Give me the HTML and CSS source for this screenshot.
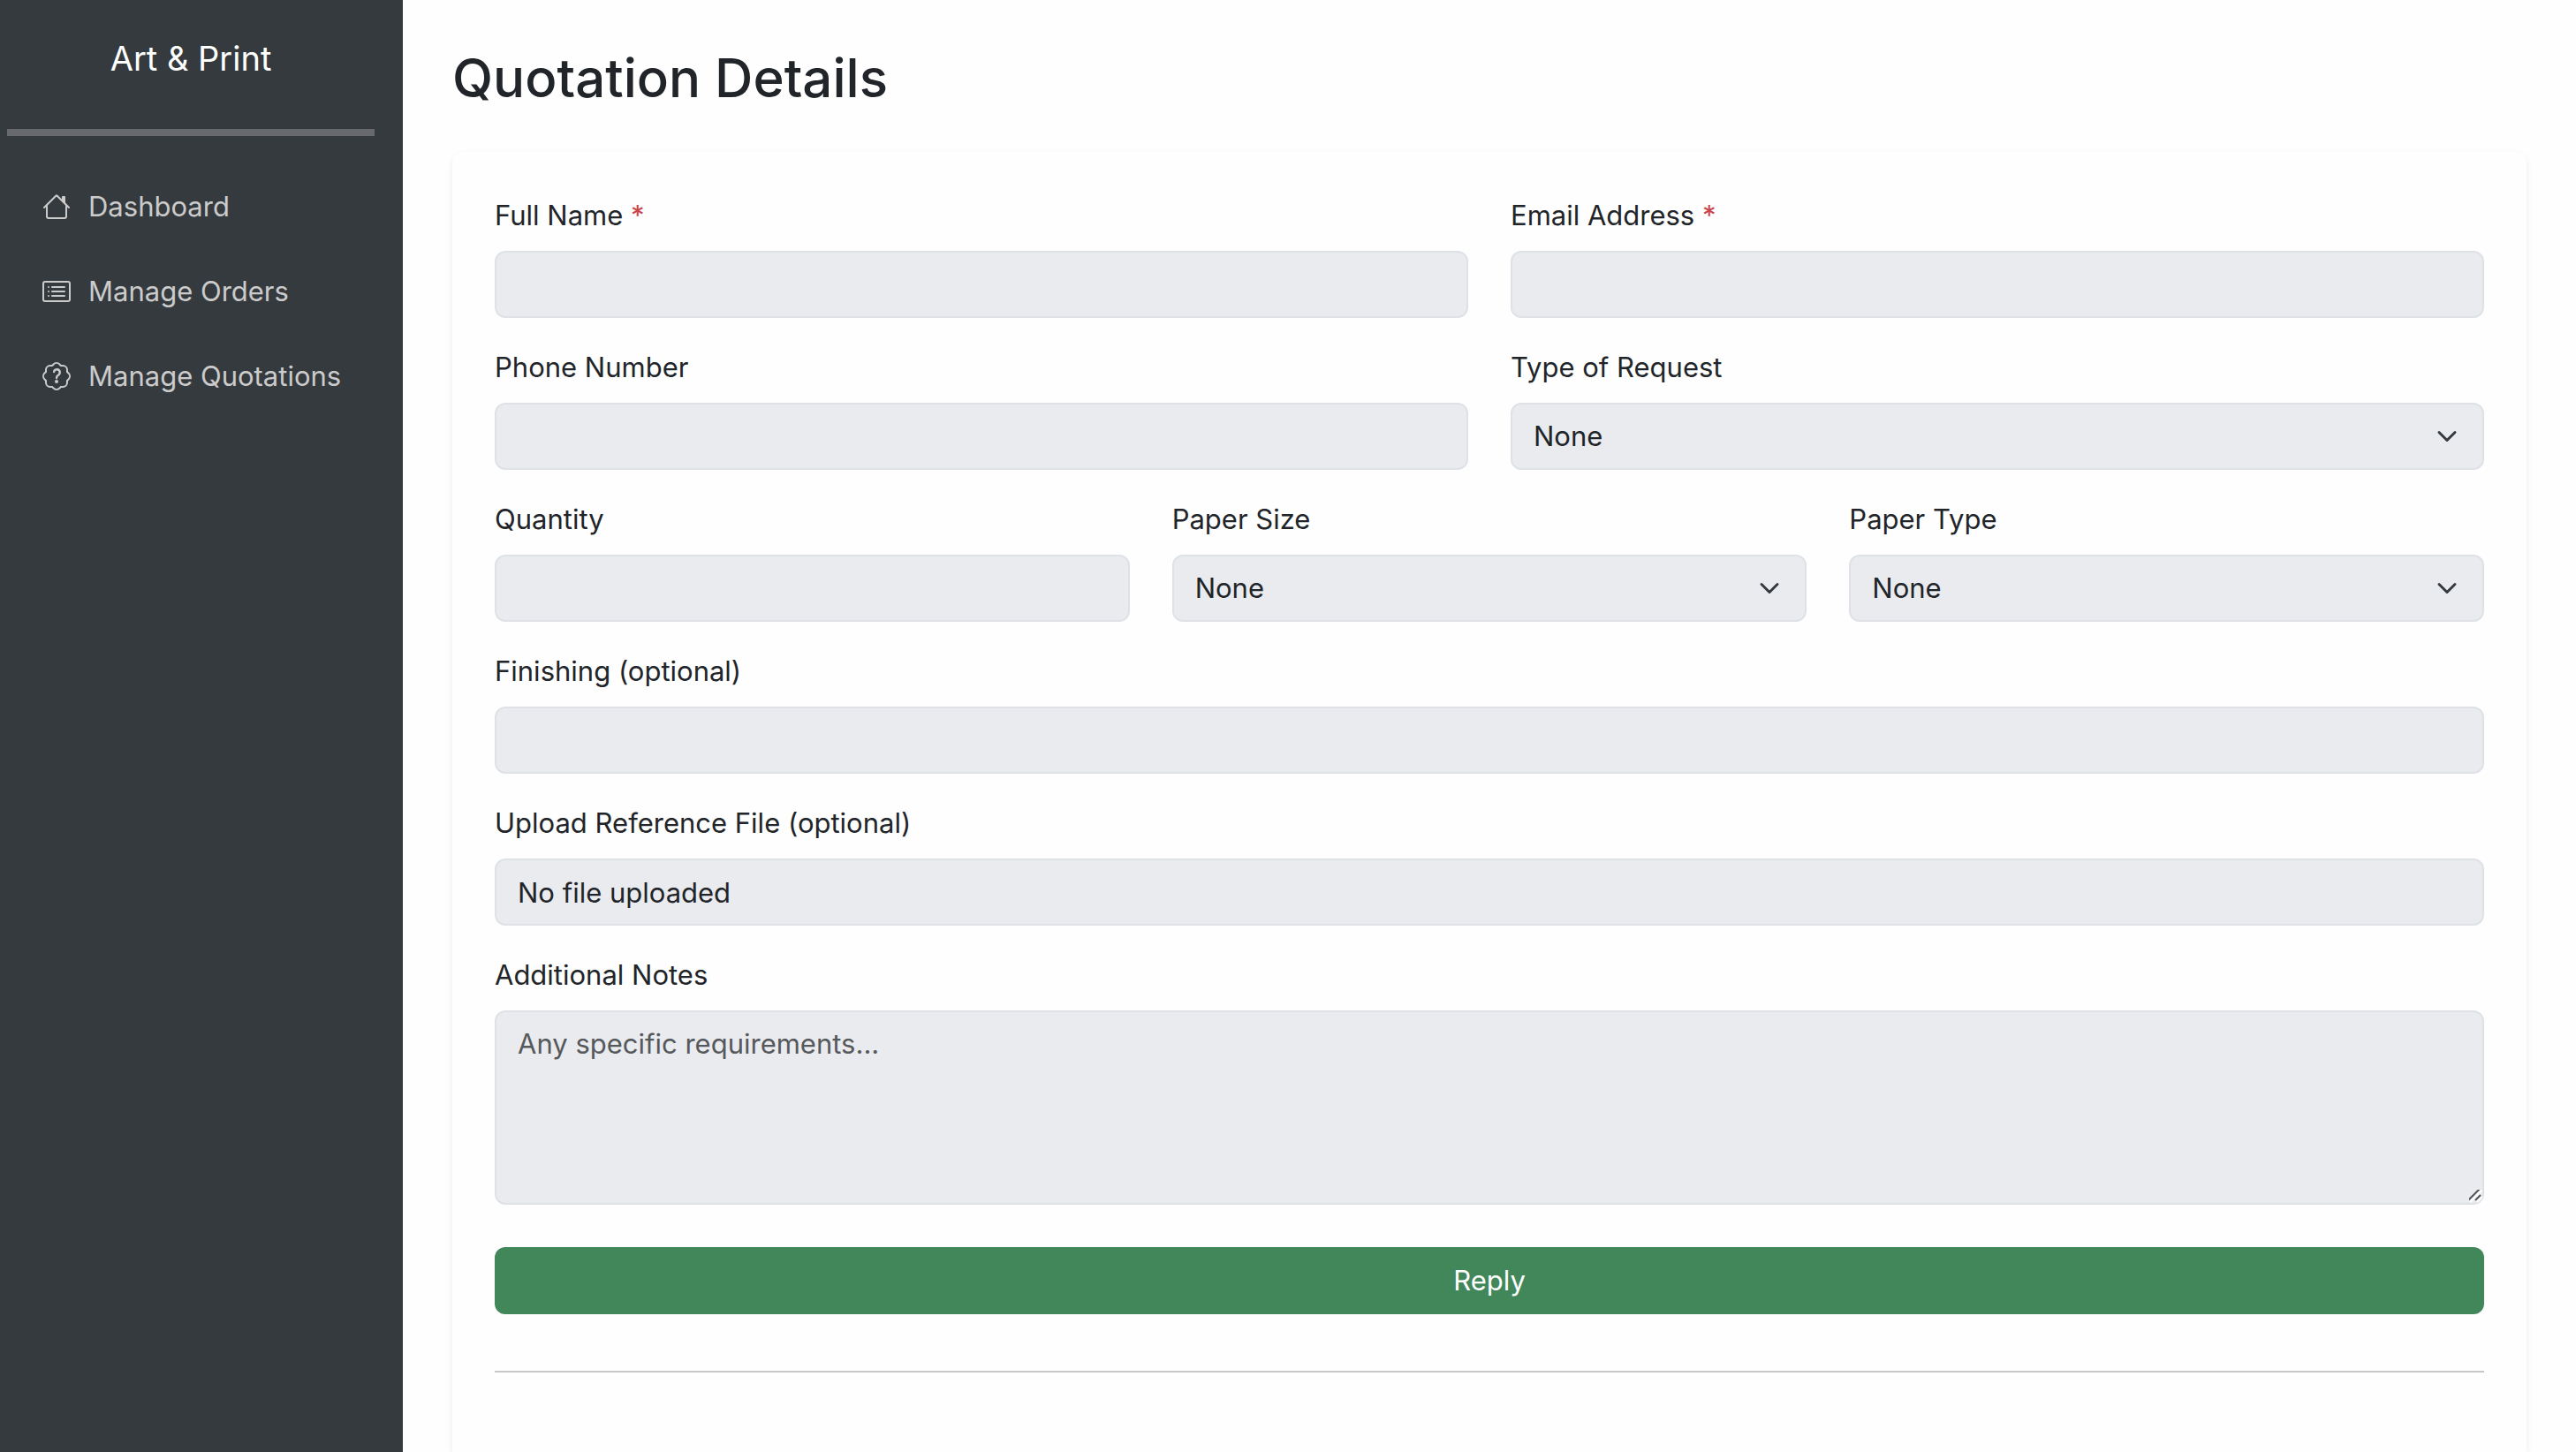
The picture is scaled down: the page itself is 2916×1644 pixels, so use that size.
FILE: index.html
```html
<!DOCTYPE html>
<html lang="en">
<head>
  <meta charset="utf-8">
  <meta name="viewport" content="width=device-width, initial-scale=1">
  <title>Quotation Details</title>
  <link rel="stylesheet" href="styles.css">
</head>
<body>
  <div class="layout">
    <aside class="sidebar">
      <h2 class="brand">Art &amp; Print</h2>
      <hr class="sidebar-rule">
      <nav class="nav">
        <a class="nav-link" href="#dashboard">
          <svg class="icon" viewBox="0 0 16 16" aria-hidden="true"><path d="M8.707 1.5a1 1 0 0 0-1.414 0L.646 8.146a.5.5 0 0 0 .708.708L2 8.207V13.5A1.5 1.5 0 0 0 3.5 15h9a1.5 1.5 0 0 0 1.5-1.5V8.207l.646.647a.5.5 0 0 0 .708-.708L13 5.793V2.5a.5.5 0 0 0-.5-.5h-1a.5.5 0 0 0-.5.5v1.293zM13 7.207V13.5a.5.5 0 0 1-.5.5h-9a.5.5 0 0 1-.5-.5V7.207l5-5z"/></svg>
          <span>Dashboard</span>
        </a>
        <a class="nav-link" href="#orders">
          <svg class="icon" viewBox="0 0 16 16" aria-hidden="true"><path d="M14.5 3a.5.5 0 0 1 .5.5v9a.5.5 0 0 1-.5.5h-13a.5.5 0 0 1-.5-.5v-9a.5.5 0 0 1 .5-.5zm-13-1A1.5 1.5 0 0 0 0 3.5v9A1.5 1.5 0 0 0 1.5 14h13a1.5 1.5 0 0 0 1.5-1.5v-9A1.5 1.5 0 0 0 14.5 2z"/><path d="M5 8a.5.5 0 0 1 .5-.5h7a.5.5 0 0 1 0 1h-7A.5.5 0 0 1 5 8m0-2.5a.5.5 0 0 1 .5-.5h7a.5.5 0 0 1 0 1h-7a.5.5 0 0 1-.5-.5m0 5a.5.5 0 0 1 .5-.5h7a.5.5 0 0 1 0 1h-7a.5.5 0 0 1-.5-.5m-1-5a.5.5 0 1 1-1 0 .5.5 0 0 1 1 0M4 8a.5.5 0 1 1-1 0 .5.5 0 0 1 1 0m0 2.5a.5.5 0 1 1-1 0 .5.5 0 0 1 1 0"/></svg>
          <span>Manage Orders</span>
        </a>
        <a class="nav-link" href="#quotations">
          <svg class="icon" viewBox="0 0 16 16" aria-hidden="true"><path d="M8.05 9.6c.336 0 .504-.24.554-.627.04-.534.198-.815.847-1.26.673-.475 1.049-1.09 1.049-1.986 0-1.325-.92-2.227-2.262-2.227-1.02 0-1.792.492-2.1 1.29A1.7 1.7 0 0 0 6 5.48c0 .393.203.64.545.64.272 0 .455-.147.564-.51.158-.592.525-.915 1.074-.915.61 0 1.03.446 1.03 1.084 0 .563-.208.885-.822 1.325-.619.433-.926.914-.926 1.64v.111c0 .428.208.745.585.745"/><path d="m10.273 2.513-.921-.944.715-.698.622.637.89-.011a2.89 2.89 0 0 1 2.924 2.924l-.01.89.636.622a2.89 2.89 0 0 1 0 4.134l-.637.622.011.89a2.89 2.89 0 0 1-2.924 2.924l-.89-.01-.622.636a2.89 2.89 0 0 1-4.134 0l-.622-.637-.89.011a2.89 2.89 0 0 1-2.924-2.924l.01-.89-.636-.622a2.89 2.89 0 0 1 0-4.134l.637-.622-.011-.89a2.89 2.89 0 0 1 2.924-2.924l.89.01.622-.636a2.89 2.89 0 0 1 4.134 0l-.715.698a1.89 1.89 0 0 0-2.704 0l-.92.944-1.32-.016a1.89 1.89 0 0 0-1.911 1.912l.016 1.318-.944.921a1.89 1.89 0 0 0 0 2.704l.944.92-.016 1.32a1.89 1.89 0 0 0 1.912 1.911l1.318-.016.921.944a1.89 1.89 0 0 0 2.704 0l.92-.944 1.32.016a1.89 1.89 0 0 0 1.911-1.912l-.016-1.318.944-.921a1.89 1.89 0 0 0 0-2.704l-.944-.92.016-1.32a1.89 1.89 0 0 0-1.912-1.911z"/><path d="M7.002 11a1 1 0 1 1 2 0 1 1 0 0 1-2 0"/></svg>
          <span>Manage Quotations</span>
        </a>
      </nav>
    </aside>

    <main class="main">
      <h1 class="page-title">Quotation Details</h1>
      <section class="card">
        <form class="form">
          <div class="field half">
            <label class="label" for="full-name">Full Name <span class="required">*</span></label>
            <input class="control" id="full-name" type="text" readonly>
          </div>
          <div class="field half">
            <label class="label" for="email">Email Address <span class="required">*</span></label>
            <input class="control" id="email" type="email" readonly>
          </div>
          <div class="field half">
            <label class="label" for="phone">Phone Number</label>
            <input class="control" id="phone" type="tel" readonly>
          </div>
          <div class="field half">
            <label class="label" for="request-type">Type of Request</label>
            <select class="control select" id="request-type"><option>None</option></select>
          </div>
          <div class="field third">
            <label class="label" for="quantity">Quantity</label>
            <input class="control" id="quantity" type="text" readonly>
          </div>
          <div class="field third">
            <label class="label" for="paper-size">Paper Size</label>
            <select class="control select" id="paper-size"><option>None</option></select>
          </div>
          <div class="field third">
            <label class="label" for="paper-type">Paper Type</label>
            <select class="control select" id="paper-type"><option>None</option></select>
          </div>
          <div class="field full">
            <label class="label" for="finishing">Finishing (optional)</label>
            <input class="control" id="finishing" type="text" readonly>
          </div>
          <div class="field full">
            <label class="label" for="file">Upload Reference File (optional)</label>
            <input class="control" id="file" type="text" value="No file uploaded" readonly>
          </div>
          <div class="field full">
            <label class="label" for="notes">Additional Notes</label>
            <textarea class="control notes" id="notes" placeholder="Any specific requirements..." readonly></textarea>
          </div>
          <button class="reply full" type="button">Reply</button>
        </form>
        <hr class="card-rule">
      </section>
    </main>
  </div>
</body>
</html>
```

FILE: styles.css
```css
*,
*::before,
*::after {
  box-sizing: border-box;
}

body {
  margin: 0;
  background: #fefefe;
  color: #212529;
  font-family: Inter, "Liberation Sans", sans-serif;
  font-size: 31px;
  line-height: 48px;
}

.layout {
  display: flex;
  min-height: 100vh;
}

/* Sidebar */

.sidebar {
  flex: 0 0 456px;
  padding: 42px 24px 0 0;
  background: #353a3e;
  color: #fff;
}

.brand {
  margin: 0;
  font-size: 38px;
  font-weight: 400;
  line-height: 48px;
  text-align: center;
}

.sidebar-rule {
  height: 8px;
  margin: 56px 8px 48px;
  border: 0;
  background: #67696e;
}

.nav {
  display: flex;
  flex-direction: column;
}

.nav-link {
  display: flex;
  align-items: center;
  gap: 20px;
  padding: 8px 16px 40px 48px;
  color: #cbcbcb;
  text-decoration: none;
  white-space: nowrap;
}

.icon {
  flex: none;
  width: 32px;
  height: 32px;
  fill: currentColor;
}

/* Page content */

.main {
  display: flex;
  flex: 1;
  flex-direction: column;
  min-width: 0;
  padding: 50px 56px 0;
}

.page-title {
  margin: 0 0 46px;
  font-size: 60px;
  font-weight: 500;
  line-height: 76px;
}

.card {
  flex: 1;
  padding: 48px;
  border-radius: 12px 12px 0 0;
  box-shadow: 0 4px 8px rgba(0, 0, 0, 0.07);
}

.form {
  display: grid;
  grid-template-columns: repeat(6, 1fr);
  gap: 32px 48px;
}

.half {
  grid-column: span 3;
}

.third {
  grid-column: span 2;
}

.full {
  grid-column: 1 / -1;
}

.field {
  display: flex;
  flex-direction: column;
  gap: 16px;
  min-width: 0;
}

.required {
  color: #cb444a;
}

.control {
  width: 100%;
  height: 76px;
  margin: 0;
  padding: 12px 24px;
  border: 2px solid #dee2e6;
  border-radius: 12px;
  outline: 0;
  background: #eaebef;
  color: #212529;
  font: inherit;
}

.control::placeholder {
  color: #56595c;
  opacity: 1;
}

.select {
  appearance: none;
  background-image: url("data:image/svg+xml,%3Csvg xmlns='http://www.w3.org/2000/svg' viewBox='0 0 16 16'%3E%3Cpath fill='none' stroke='%23343a40' stroke-linecap='round' stroke-linejoin='round' stroke-width='2' d='m2 5 6 6 6-6'/%3E%3C/svg%3E");
  background-position: right 24px center;
  background-repeat: no-repeat;
  background-size: 32px 24px;
}

.notes {
  height: 220px;
  resize: vertical;
}

.notes::-webkit-scrollbar {
  width: 20px;
  height: 20px;
}

.notes::-webkit-resizer {
  background: url("data:image/svg+xml,%3Csvg xmlns='http://www.w3.org/2000/svg' width='20' height='20'%3E%3Cpath fill='none' stroke='%23fff' stroke-width='2' d='M6 19 20 5M14 19l6-6'/%3E%3Cpath fill='none' stroke='%23555' stroke-width='2' d='M4 17 18 3M12 17l6-6'/%3E%3C/svg%3E") right bottom no-repeat;
}

.reply {
  height: 76px;
  margin-top: 16px;
  border: 0;
  border-radius: 12px;
  background: #41875a;
  color: #fff;
  font: inherit;
  cursor: pointer;
}

.card-rule {
  height: 2px;
  margin: 64px 0 32px;
  border: 0;
  background: #c8c8c8;
}
```
